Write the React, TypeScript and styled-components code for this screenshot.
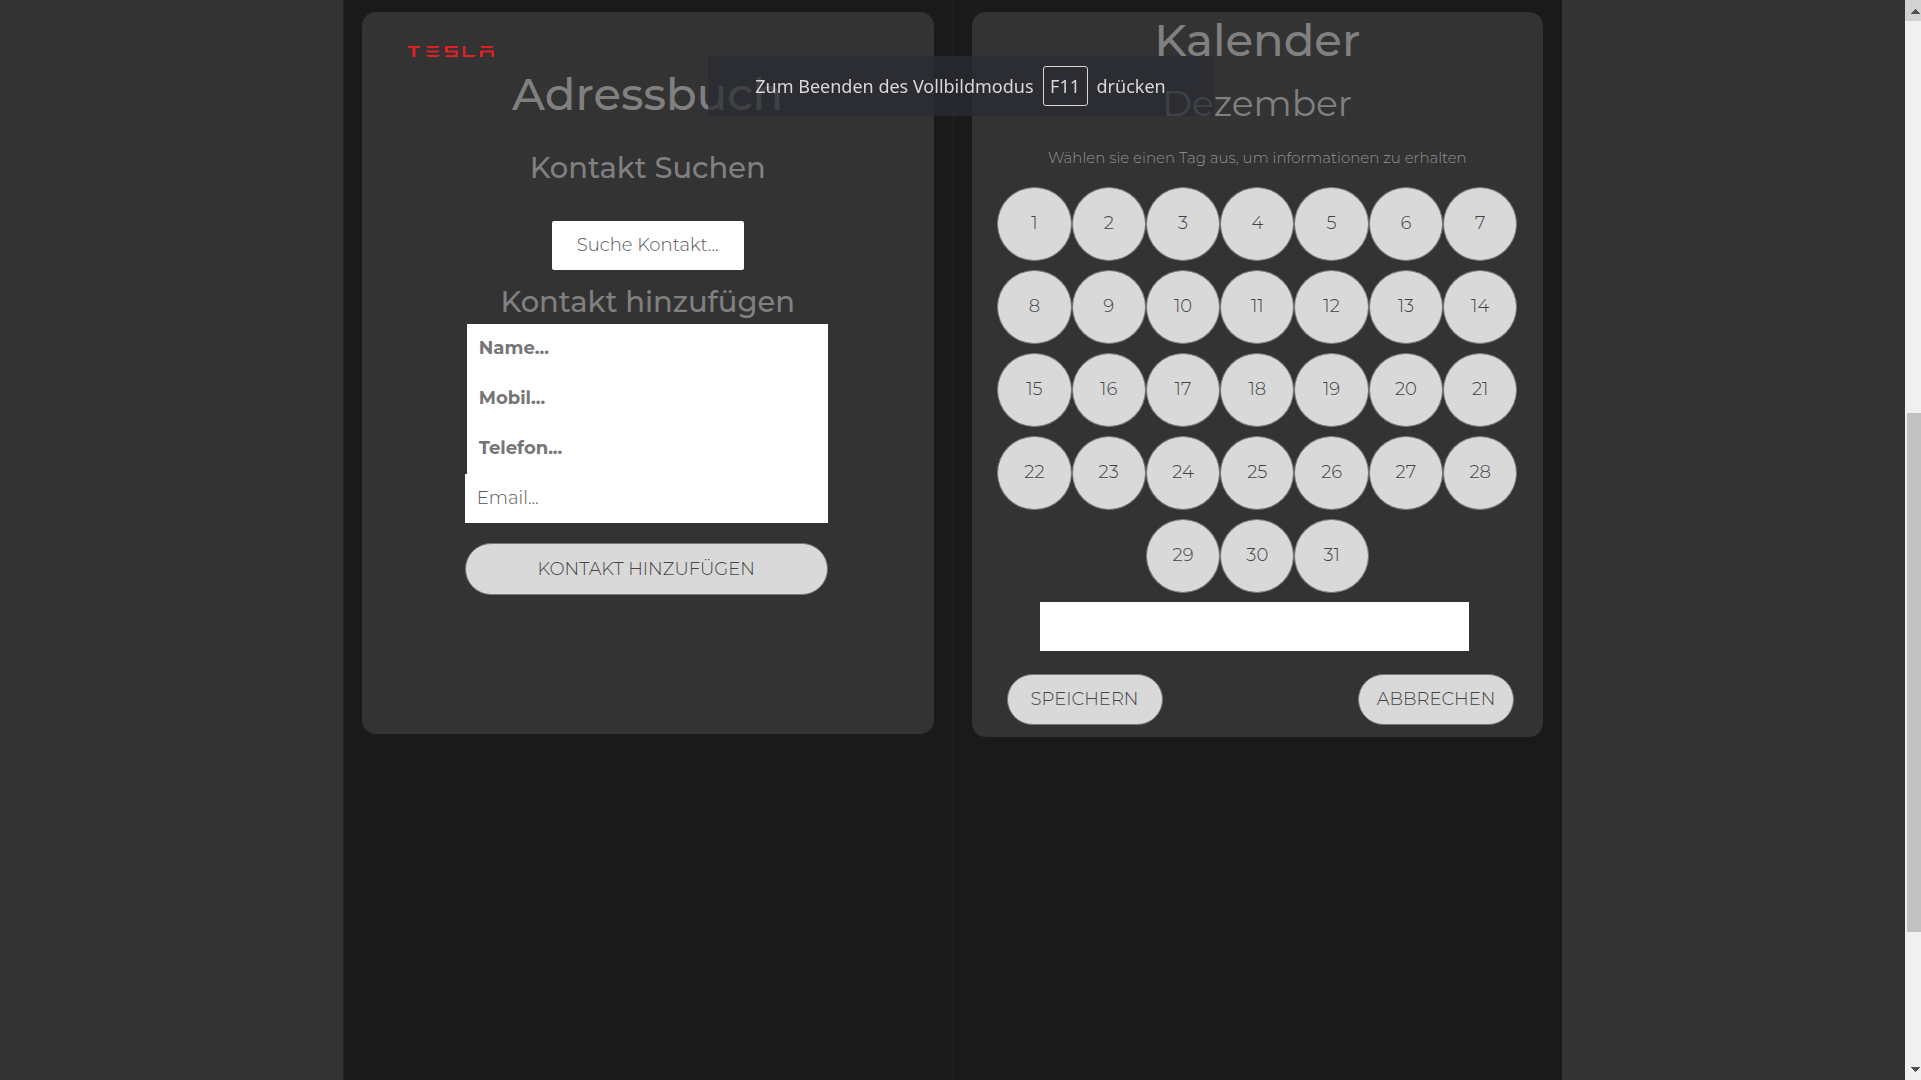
import React from "react";
import styled, { createGlobalStyle } from "styled-components";

const GlobalStyle = createGlobalStyle`
  *, *::before, *::after { box-sizing: border-box; }
  html, body { margin: 0; height: 100%; background: #333; overflow: hidden; }
  body { font-family: Montserrat, Inter, "Open Sans", sans-serif; color: #808080; }
  h1, h2, p { margin: 0; }
`;

const Shell = styled.div`
  display: grid;
  grid-template-columns: 1fr 16px;
  min-height: 100vh;
`;

const Page = styled.main`
  display: flex;
  justify-content: center;
`;

const Columns = styled.div`
  display: grid;
  grid-template-columns: 1fr 1fr;
  width: 64%;
  background: #1a1a1a;
`;

const Column = styled.div`
  padding: 12px 19px 12px 18px;
  border-left: 1px solid #242424;
`;

const Card = styled.section`
  display: flex;
  flex-direction: column;
  align-items: center;
  border-radius: 14px;
  background: #333;
  text-align: center;
`;

const AddressCard = styled(Card)`
  min-height: 722px;
  padding-top: 34px;
`;

const CalendarCard = styled(Card)`
  padding-bottom: 12px;
`;

const Logo = styled.svg`
  width: 87px;
  height: 11px;
  margin-left: 45px;
  align-self: flex-start;
`;

const Title = styled.h1<{ $spaced?: boolean }>`
  margin: ${(p) => (p.$spaced ? "9px 0 26px" : "0")};
  font-size: 45px;
  line-height: 56px;
  font-weight: 500;
`;

const Month = styled.h2`
  margin-top: 12px;
  font-size: 36px;
  line-height: 46px;
  font-weight: 400;
`;

const Subtitle = styled.h2`
  font-size: 29px;
  line-height: 40px;
  font-weight: 500;
`;

const Hint = styled.p`
  margin: 22px 0 19px;
  font-size: 15px;
  line-height: 20px;
  font-weight: 300;
  color: #929292;
`;

const TextField = styled.input<{ $bold?: boolean }>`
  display: block;
  width: 100%;
  height: ${(p) => (p.$bold ? 50 : 49)}px;
  padding: 0 12px 2px;
  border: 0;
  background: #fff;
  color: #555;
  font-family: inherit;
  font-size: 18px;
  font-weight: ${(p) => (p.$bold ? 700 : 300)};
  &::placeholder { color: ${(p) => (p.$bold ? "#757575" : "#555")}; opacity: 1; }
`;

const SearchField = styled(TextField)`
  width: 192px;
  margin: 33px 0 12px;
  border-radius: 2px;
  text-align: center;
`;

const ContactForm = styled.form`
  width: calc(64% - 3px);
  margin: 2px 3px 0 0;
`;

const BoldFields = styled.div`
  padding-left: 2px;
`;

const NoteField = styled(TextField)`
  width: 75%;
  margin: 9px 6px 0 0;
`;

const Pill = styled.button`
  height: 52px;
  padding: 0;
  border: 1px solid #777;
  border-radius: 26px;
  background: #d9d9d9;
  color: #444;
  font-family: inherit;
  font-size: 18px;
  font-weight: 300;
  text-transform: uppercase;
`;

const WidePill = styled(Pill)`
  width: 100%;
  margin-top: 20px;
`;

const ActionPill = styled(Pill)`
  width: 156px;
  height: 51px;
  padding-bottom: 2px;
`;

const Days = styled.div`
  display: flex;
  flex-wrap: wrap;
  justify-content: center;
  row-gap: 9px;
  width: 91%;
`;

const Day = styled.button`
  width: calc(100% / 7);
  height: 74px;
  padding: 0 0 2px;
  border: 1px solid #777;
  border-radius: 50%;
  background: #d9d9d9;
  color: #444;
  font-family: inherit;
  font-size: 18px;
  font-weight: 300;
`;

const Actions = styled.div`
  display: flex;
  justify-content: space-between;
  width: 100%;
  margin-top: 23px;
  padding: 0 29px 0 35px;
`;

const Notice = styled.div`
  position: fixed;
  top: 56px;
  left: 50%;
  display: flex;
  align-items: center;
  justify-content: center;
  gap: 9px;
  width: 506px;
  height: 60px;
  transform: translateX(-50%);
  background: rgba(42, 44, 51, 0.75);
  color: #d8d8d8;
  font-family: "Segoe UI", "Noto Sans", "Open Sans", sans-serif;
  font-size: 18px;
  line-height: 24px;
`;

const Key = styled.kbd`
  display: grid;
  place-items: center;
  width: 45px;
  height: 40px;
  border: 1px solid #d8d8d8;
  border-radius: 3px;
  font: inherit;
`;

const Scrollbar = styled.div`
  display: flex;
  flex-direction: column;
  height: 100vh;
  background: #f0f0f0;
`;

const ScrollEnd = styled.div<{ $active?: boolean }>`
  display: flex;
  align-items: center;
  justify-content: flex-end;
  height: 21px;
  background: ${(p) => (p.$active ? "#d2d2d2" : "transparent")};
`;

const Track = styled.div`
  display: grid;
  flex: 1;
  grid-template-rows: 392fr 519fr 127fr;
`;

const Thumb = styled.div`
  grid-row: 2;
  margin-left: 2px;
  background: #c1c1c1;
`;

const days = Array.from({ length: 31 }, (_, i) => i + 1);

function ScrollArrow({ down }: { down?: boolean }) {
  return (
    <svg width="10" height="6" viewBox="0 0 10 6" shapeRendering="crispEdges" aria-hidden="true">
      <path d={down ? "M0 0H9L4.500 5Z" : "M0 5.500H9L4.500 .5Z"} fill="#505050" />
    </svg>
  );
}

export default function App() {
  return (
    <>
      <GlobalStyle />
      <Shell>
        <Page>
          <Columns>
            <Column>
              <AddressCard>
                <Logo viewBox="0 0 87 11" role="img" aria-label="Tesla" fill="#e31f26">
                  <path d="M0 0H14L12 2H8.500V11H5.500V2H2Z" />
                  <path d="M19 0H33L31 2H21ZM19 4.500H33L31 6.500H21ZM19 9H33L31 11H21Z" />
                  <path d="M38 0H52L50 2H41V4.500H51V11H38L40 9H48.500V6.500H38Z" />
                  <path d="M56 0H58.500V9H69L67 11H56Z" />
                  <path d="M73 0H87L85 2H75ZM73 4.500H87V11H84.500V6.500H76V11H73Z" />
                </Logo>
                <Title $spaced>Adressbuch</Title>
                <Subtitle>Kontakt Suchen</Subtitle>
                <SearchField aria-label="Suche Kontakt" placeholder="Suche Kontakt..." />
                <Subtitle>Kontakt hinzufügen</Subtitle>
                <ContactForm onSubmit={(e: React.FormEvent) => e.preventDefault()}>
                  <BoldFields>
                    <TextField $bold aria-label="Name" placeholder="Name..." />
                    <TextField $bold type="tel" aria-label="Mobil" placeholder="Mobil..." />
                    <TextField $bold type="tel" aria-label="Telefon" placeholder="Telefon..." />
                  </BoldFields>
                  <TextField type="email" aria-label="Email" placeholder="Email..." />
                  <WidePill type="submit">Kontakt hinzufügen</WidePill>
                </ContactForm>
              </AddressCard>
            </Column>
            <Column>
              <CalendarCard>
                <Title>Kalender</Title>
                <Month>Dezember</Month>
                <Hint>Wählen sie einen Tag aus, um informationen zu erhalten</Hint>
                <Days>
                  {days.map((d) => (
                    <Day key={d} type="button">{d}</Day>
                  ))}
                </Days>
                <NoteField aria-label="Notiz" />
                <Actions>
                  <ActionPill type="button">Speichern</ActionPill>
                  <ActionPill type="button">Abbrechen</ActionPill>
                </Actions>
              </CalendarCard>
            </Column>
          </Columns>
        </Page>
        <Scrollbar aria-hidden="true">
          <ScrollEnd $active><ScrollArrow /></ScrollEnd>
          <Track><Thumb /></Track>
          <ScrollEnd><ScrollArrow down /></ScrollEnd>
        </Scrollbar>
      </Shell>
      <Notice role="status">
        <span>Zum Beenden des Vollbildmodus</span>
        <Key>F11</Key>
        <span>drücken</span>
      </Notice>
    </>
  );
}
